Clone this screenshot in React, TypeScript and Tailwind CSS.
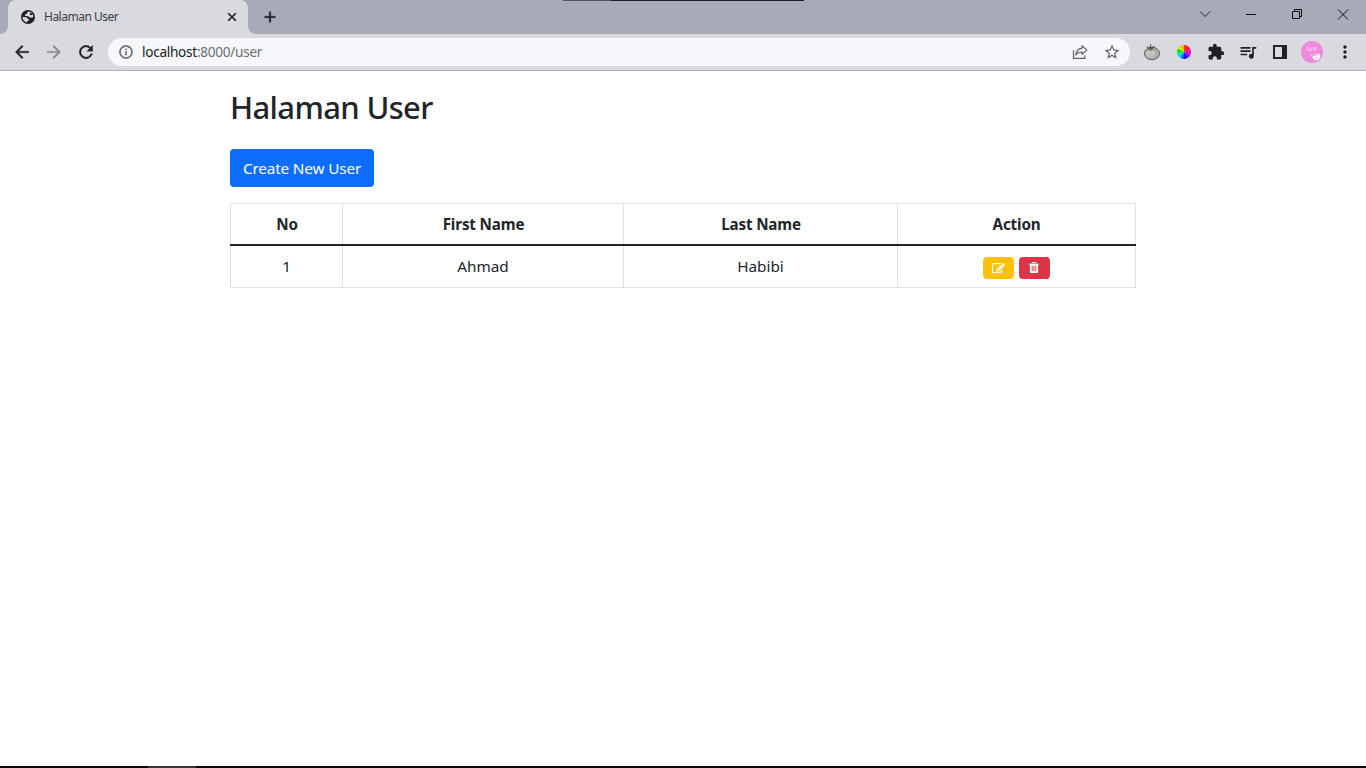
import React from "react";
import {
  MdAdd,
  MdArrowBack,
  MdArrowForward,
  MdClose,
  MdExtension,
  MdInfoOutline,
  MdMoreVert,
  MdQueueMusic,
  MdRefresh,
  MdStarBorder,
} from "react-icons/md";

function GlobeIcon() {
  return (
    <svg className="h-[14px] w-[14px]" viewBox="0 0 14 14">
      <circle cx="7" cy="7" r="7" fill="#202124" />
      <path d="M8 1.500 6 2.600 5.900 3.900 3.900 4.600l.3 1.500 3 .1L8.800 7.600l2.200.1 1.300-.9C12.400 3.900 10.300 1.800 8 1.500Z" fill="#d8dae0" />
      <path d="M1.600 6.800 5.800 7.500 7 8.900 8.100 9.400 7.600 10.700 6.300 11 6.200 12.400C3.200 12 1.400 9.500 1.600 6.800Z" fill="#d8dae0" />
      <path d="M9 2.600 8.600 4.300 9.600 5.200 11.600 4.800 11 3.500Z" fill="#202124" />
    </svg>
  );
}

function ShareIcon() {
  return (
    <svg className="h-4 w-4" viewBox="0 0 16 16" fill="none" stroke="#5f6368" strokeWidth="1.2" strokeLinejoin="round">
      <path d="M1.500 6.200v8.200h11.300v-3.200" />
      <path d="M10 1.800 14.900 6.100 10 10.300V8C7.200 7.900 5.200 8.900 3.800 11 4.200 7.300 6.300 4.700 10 4.200Z" />
    </svg>
  );
}

function TomatoIcon() {
  return (
    <svg className="h-[18px] w-[18px]" viewBox="0 0 18 18">
      <ellipse cx="9" cy="10.500" rx="7.600" ry="6.300" fill="#aeaeaa" stroke="#62625f" />
      <ellipse cx="7.500" cy="10.500" rx="4.500" ry="3.600" fill="#c4c4c0" />
      <path d="M7.700 5.300 7.500 1.400M7.700 4.800 3.500 4M7.700 4.800l3.800-1.300M7.700 4.800 5.200 7M7.700 4.800l.4 3.200M7.700 4.800l3 1.700" stroke="#555553" strokeWidth="1.100" fill="none" />
    </svg>
  );
}

const wheelColors = ["#ff2a00", "#ff0038", "#ff1490", "#d800f0", "#7800ff", "#2800ff", "#0060ff", "#00c8f0", "#00f080", "#10e000", "#c8f000", "#ffb000"];

function ColorWheelIcon() {
  return (
    <svg className="h-[14px] w-[14px]" viewBox="-7 -7 14 14">
      {wheelColors.map((color, i) => (
        <path key={color} d="M0 0V-7A7 7 0 0 1 3.500-6.060Z" fill={color} transform={`rotate(${i * 30})`} />
      ))}
    </svg>
  );
}

function PanelIcon() {
  return (
    <svg className="h-[14px] w-[14px]" viewBox="0 0 14 14">
      <path d="M0 0h14v14H0ZM2 2v10h7V2Z" fill="#202124" fillRule="evenodd" />
    </svg>
  );
}

function Avatar() {
  return (
    <svg className="h-[22px] w-[22px]" viewBox="0 0 22 22">
      <circle cx="11" cy="11" r="11" fill="#f288da" />
      <path d="M6.500 5.500C6.500 11 10 11.500 10.200 6.500M12 6.500c.5 4 3 4 2.700-.5" fill="none" stroke="#f9c8ee" strokeWidth="1.200" />
      <path d="M9 13.500c2 1.500 4.500.5 7.500-1.500" fill="none" stroke="#f9c8ee" />
      <path d="M11.500 15.700 19 12.600C19.900 16.500 18.300 19.200 15.500 19.400c-2 .1-3.500-1.500-4-3.700Z" fill="#fff" />
      <path d="M13.500 17.700c1.500-1.300 2.800-1.300 4.200-1.200" fill="none" stroke="#f288da" strokeWidth=".5" />
    </svg>
  );
}

function EditIcon() {
  return (
    <svg className="h-[11px] w-[13px]" viewBox="0 0 1792 1536" fill="#fff" stroke="#fff" strokeWidth="40">
      <path d="M888 1056l116-116-152-152-116 116v56h96v96h56zm440-720q-16-16-33 1L945 687q-17 17-1 33t33-1l350-350q17-17 1-33zm80 594v190q0 119-84.500 203.500T1120 1408H288q-119 0-203.500-84.500T0 1120V288Q0 169 84.500 84.500T288 0h832q63 0 117 25 15 7 18 23 3 17-9 29l-49 49q-14 14-32 8-23-6-45-6H288q-66 0-113 47t-47 113v832q0 66 47 113t113 47h832q66 0 113-47t47-113V994q0-13 9-22l64-64q15-15 35-7t20 29zm-96-738l288 288-672 672H640V864zm444 132l-92 92-288-288 92-92q28-28 68-28t68 28l152 152q28 28 28 68t-28 68z" />
    </svg>
  );
}

function TrashIcon() {
  return (
    <svg className="mr-px mb-px h-[11px] w-[10px]" viewBox="0 0 1408 1536" fill="#fff">
      <path d="M512 1248V544q0-32-32-32h-64q-32 0-32 32v704q0 32 32 32h64q32 0 32-32zm256 0V544q0-32-32-32h-64q-32 0-32 32v704q0 32 32 32h64q32 0 32-32zm256 0V544q0-32-32-32h-64q-32 0-32 32v704q0 32 32 32h64q32 0 32-32zM480 256h448l-48-117q-7-9-17-11H546q-10 2-17 11zm928 32v64q0 32-32 32h-96v948q0 83-47 143.500t-113 60.500H288q-66 0-113-58.500T128 1336V384H32q-32 0-32-32v-64q0-32 32-32h309l70-167q15-37 54-63t79-26h320q40 0 79 26t54 63l70 167h309q32 0 32 32z" />
    </svg>
  );
}

function TitleBar() {
  return (
    <div className="relative flex h-[34px] items-end bg-[#a7abb7]">
      <div className="absolute top-0 left-[563px] flex h-px w-[241px] bg-[#1f1c25]">
        <div className="w-12 bg-[#57535c]" />
      </div>
      <div className="flex w-2 shrink-0 self-stretch bg-[#d8dae0]">
        <div className="w-2 rounded-br-lg bg-[#a7abb7]" />
      </div>
      <div className="flex w-60 shrink-0 self-stretch bg-[#a7abb7]">
        <div className="flex h-full w-60 items-center rounded-t-lg bg-[#d8dae0] pr-[9px] pl-[13px]">
          <GlobeIcon />
          <span className="ml-[9px] flex-1 text-[12px] tracking-[-0.5px] text-[#3c4043]">Halaman User</span>
          <MdClose className="h-[14px] w-[14px] stroke-[#202124] stroke-1 text-[#202124] [&>path[fill=none]]:stroke-none" />
        </div>
      </div>
      <div className="flex w-2 shrink-0 self-stretch bg-[#d8dae0]">
        <div className="w-2 rounded-bl-lg bg-[#a7abb7]" />
      </div>
      <MdAdd className="mb-[8px] ml-[5px] h-[18px] w-[18px] stroke-[#202124] stroke-[0.6] text-[#202124] [&>path[fill=none]]:stroke-none" />
      <svg className="mb-[14px] ml-auto h-3 w-[150px]" viewBox="0 0 150 12" fill="none" stroke="#111" strokeWidth="1">
        <path d="M1 3.500 6 8.500 11 3.500" stroke="#202228" />
        <path d="M47 6.500H57" />
        <path d="M93.500 3.500h7v7h-7zM95.500 3.500v-2h7v7h-2" />
        <path d="M139 1.500l10 10M149 1.500l-10 10" />
      </svg>
      <div className="w-[17px]" />
    </div>
  );
}

function Toolbar() {
  return (
    <div className="flex h-[37px] items-center border-b border-[#b0b2b9] bg-[#d8dae0] pl-3 text-[#202124]">
      <MdArrowBack className="h-5 w-5 stroke-[#202124] stroke-[0.4] [&>path[fill=none]]:stroke-none" />
      <MdArrowForward className="ml-3 h-5 w-5 stroke-[#8b8d93] stroke-[0.4] text-[#8b8d93] [&>path[fill=none]]:stroke-none" />
      <MdRefresh className="ml-3 h-5 w-5 stroke-[#202124] stroke-[0.4] [&>path[fill=none]]:stroke-none" />
      <div className="ml-3 flex h-7 w-[1022px] items-center rounded-full bg-[#f5f7fa] pr-[9px] pl-[10px]">
        <MdInfoOutline className="h-4 w-4 stroke-[#5f6368] stroke-[0.3] text-[#5f6368] [&>path[fill=none]]:stroke-none" />
        <span className="ml-2 flex-1 text-[13.6px] tracking-[-0.28px] text-[#6a6e73]">
          <span className="text-[#202124]">localhost</span>:8000/user
        </span>
        <ShareIcon />
        <MdStarBorder className="ml-[15px] h-[18px] w-[18px] text-[#5f6368]" />
      </div>
      <div className="ml-[13px] flex shrink-0 items-center">
        <TomatoIcon />
        <span className="ml-4"><ColorWheelIcon /></span>
        <MdExtension className="ml-4 h-[18px] w-[18px]" />
        <MdQueueMusic className="ml-[13px] h-5 w-5" />
        <span className="ml-[15px]"><PanelIcon /></span>
        <span className="ml-[14px]"><Avatar /></span>
        <MdMoreVert className="ml-3 h-5 w-5" />
      </div>
    </div>
  );
}

const users = [{ no: 1, first: "Ahmad", last: "Habibi" }];

function UserTable() {
  return (
    <table className="mt-4 w-[906px] table-fixed border-separate border-spacing-0 text-center text-[16px] leading-6">
      <colgroup>
        <col className="w-[112px]" />
        <col className="w-[281px]" />
        <col className="w-[274px]" />
        <col className="w-[239px]" />
      </colgroup>
      <thead>
        <tr className="h-[41px]">
          {["No", "First Name", "Last Name", "Action"].map((name) => (
            <th key={name} className="border-t border-l border-[#dee2e6] p-0 pl-px text-[15.2px] font-bold tracking-[-0.15px] last:border-r last:pl-0">
              {name}
            </th>
          ))}
        </tr>
        <tr className="h-0.5">
          <td colSpan={4} className="bg-[#212529] p-0" />
        </tr>
      </thead>
      <tbody>
        {users.map((user) => (
          <tr key={user.no} className="h-[42px]">
            <td className="border-b border-l border-[#dee2e6] p-0 pb-0.5 text-[15.3px]">{user.no}</td>
            <td className="border-b border-l border-[#dee2e6] p-0 pb-0.5 text-[15.3px]">{user.first}</td>
            <td className="border-b border-l border-[#dee2e6] p-0 pb-0.5 text-[15.3px]">{user.last}</td>
            <td className="border-x border-b border-[#dee2e6] p-0">
              <div className="flex justify-center gap-[5px] pt-[3px]">
                <button className="flex h-[22px] w-[31px] items-center justify-center rounded-[4px] bg-[#ffc107]"><EditIcon /></button>
                <button className="flex h-[22px] w-[31px] items-center justify-center rounded-[4px] bg-[#dc3545]"><TrashIcon /></button>
              </div>
            </td>
          </tr>
        ))}
      </tbody>
    </table>
  );
}

export default function App() {
  return (
    <div className="flex h-screen flex-col overflow-hidden bg-white font-['Noto_Sans','Open_Sans',sans-serif]">
      <TitleBar />
      <Toolbar />
      <main className="flex flex-1 flex-col items-start pt-[17px] pl-[230px] text-[#212529]">
        <h1 className="text-[31px] leading-[38px] font-medium tracking-[-0.65px]">Halaman User</h1>
        <button className="mt-[23px] h-[38px] w-36 rounded-[4px] bg-[#0d6efd] text-[15.3px] tracking-[-0.15px] whitespace-nowrap text-white">Create New User</button>
        <UserTable />
      </main>
      <div className="flex h-0.5 bg-[#08070a] pl-[148px]">
        <div className="w-12 bg-[#343434]" />
      </div>
    </div>
  );
}
